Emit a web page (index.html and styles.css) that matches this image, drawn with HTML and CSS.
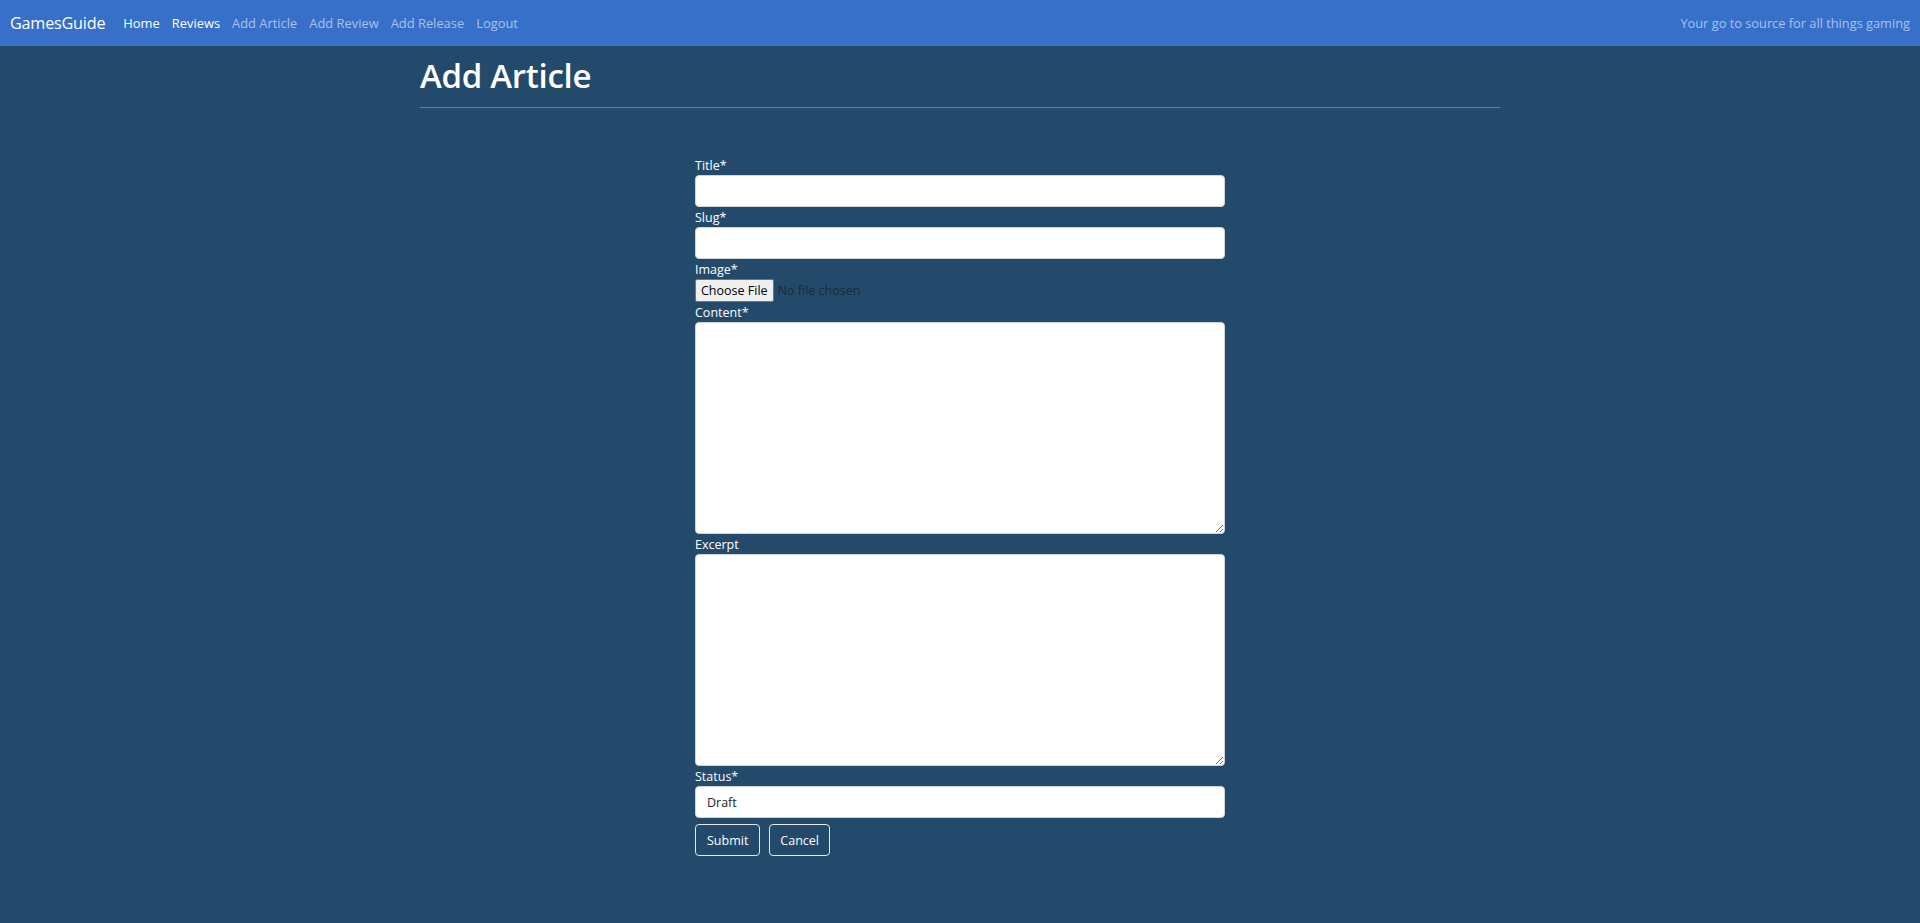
FILE: index.html
```html
<!DOCTYPE html>
<html lang="en">
<head>
<meta charset="utf-8">
<title>Add Article - GamesGuide</title>
<link rel="stylesheet" href="styles.css">
</head>
<body>
<nav class="navbar">
  <a class="brand" href="#">GamesGuide</a>
  <ul class="nav">
    <li><a class="nav-link active" href="#">Home</a></li>
    <li><a class="nav-link active" href="#">Reviews</a></li>
    <li><a class="nav-link" href="#">Add Article</a></li>
    <li><a class="nav-link" href="#">Add Review</a></li>
    <li><a class="nav-link" href="#">Add Release</a></li>
    <li><a class="nav-link" href="#">Logout</a></li>
  </ul>
  <span class="tagline">Your go to source for all things gaming</span>
</nav>
<main class="container">
  <div class="page-header">
    <h1>Add Article</h1>
  </div>
  <form class="article-form">
    <div class="field">
      <label for="title">Title*</label>
      <input id="title" class="control" type="text">
    </div>
    <div class="field">
      <label for="slug">Slug*</label>
      <input id="slug" class="control" type="text">
    </div>
    <div class="field">
      <label for="image">Image*</label>
      <input id="image" class="file-input" type="file">
    </div>
    <div class="field">
      <label for="content">Content*</label>
      <textarea id="content" class="control area"></textarea>
    </div>
    <div class="field">
      <label for="excerpt">Excerpt</label>
      <textarea id="excerpt" class="control area"></textarea>
    </div>
    <div class="field">
      <label for="status">Status*</label>
      <select id="status" class="control select">
        <option>Draft</option>
        <option>Published</option>
      </select>
    </div>
    <div class="actions">
      <button type="button" class="btn">Submit</button>
      <button type="button" class="btn">Cancel</button>
    </div>
  </form>
</main>
</body>
</html>
```
FILE: styles.css
```css
* { box-sizing: border-box; }
html, body { margin: 0; padding: 0; }
body {
  background: #234a6b;
  font-family: "Open Sans", "Noto Sans", sans-serif;
  color: #fff;
  min-height: 923px;
}
.navbar {
  height: 46px;
  background: #3670c8;
  display: flex;
  align-items: center;
  padding: 0 10px;
}
.brand {
  font-size: 16.2px;
  color: #fff;
  text-decoration: none;
  margin-right: 12px;
  letter-spacing: -0.2px;
}
.nav {
  list-style: none;
  margin: 0;
  padding: 0;
  display: flex;
}
.nav-link {
  display: block;
  padding: 0 6px;
  font-size: 12.9px;
  color: #a9c2e9;
  text-decoration: none;
}
.nav-link.active { color: #fff; }
.tagline {
  margin-left: auto;
  font-size: 12.8px;
  color: #a9c2e9;
}
.container {
  width: 1080px;
  margin: 0 auto;
}
.page-header {
  padding-top: 9px;
  border-bottom: 1px solid #5b80a8;
  padding-bottom: 11px;
}
.page-header h1 {
  margin: 0;
  font-size: 33px;
  font-weight: 600;
  line-height: 41px;
  letter-spacing: -0.3px;
}
.article-form {
  width: 530px;
  margin: 47px auto 0;
}
.field label {
  display: block;
  font-size: 12.5px;
  line-height: 19px;
  padding-top: 1px;
  color: #fff;
}
.control {
  display: block;
  width: 100%;
  height: 32px;
  border: 1px solid #ced4da;
  border-radius: 4px;
  background: #fff;
  font-family: "Open Sans", "Noto Sans", sans-serif;
  font-size: 12.5px;
  color: #212529;
  padding: 0 11px;
  margin: 0;
}
.area {
  height: 212px;
  resize: vertical;
  padding: 6px 11px;
}
.select {
  appearance: none;
  -webkit-appearance: none;
}
.file-input {
  display: block;
  height: 23px;
  font-family: "Open Sans", "Noto Sans", sans-serif;
  font-size: 12.5px;
  color: #16293a;
  margin: 0;
}
.file-input::file-selector-button {
  font-family: "Open Sans", "Noto Sans", sans-serif;
  font-size: 12.5px;
  height: 23px;
  padding: 0 5px;
  margin-right: 4px;
  background: #efefef;
  border: 1px solid #767676;
  border-radius: 2px;
  color: #000;
}
.actions {
  display: flex;
  gap: 9px;
  margin-top: 6px;
}
.btn {
  height: 32px;
  padding: 0 11px;
  background: transparent;
  border: 1px solid #e6ecf2;
  border-radius: 4px;
  color: #fff;
  font-family: "Open Sans", "Noto Sans", sans-serif;
  font-size: 12.5px;
}
.btn + .btn { padding: 0 10px; }
```
